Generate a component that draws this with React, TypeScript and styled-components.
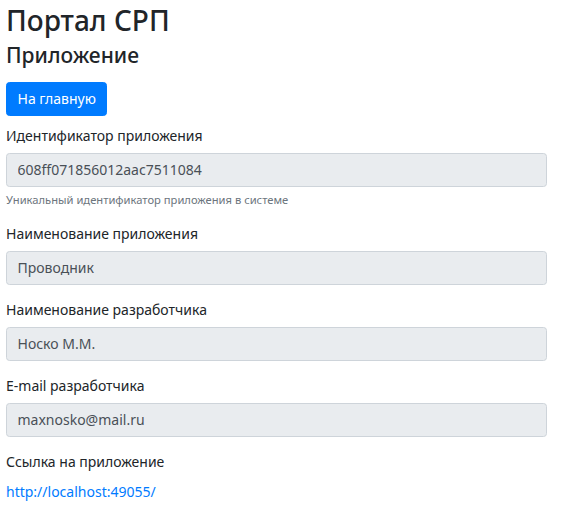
import { createGlobalStyle } from "styled-components"
import styled from "styled-components"

const GlobalStyle = createGlobalStyle`
  * { box-sizing: border-box; }
  body {
    margin: 0;
    font-family: "Noto Sans", "Open Sans", sans-serif;
    font-size: 14px;
    line-height: 1.5;
    color: #212529;
    background: #fff;
  }
`

const Page = styled.div`
  display: flex;
  flex-direction: column;
  padding: 0 16px 0 6px;
`

const Title = styled.h2`
  margin: 4px 0 5px;
  font-size: 28px;
  font-weight: 500;
  line-height: 1.2;
`

const Subtitle = styled.h4`
  margin: 0 0 14px;
  font-size: 21px;
  font-weight: 500;
  line-height: 1.2;
`

const HomeButton = styled.button`
  align-self: flex-start;
  height: 34px;
  padding: 0 10.5px;
  margin-bottom: 9px;
  border: 1px solid #007bff;
  border-radius: 3.5px;
  background: #007bff;
  color: #fff;
  font: inherit;
  cursor: pointer;
`

const FormGroup = styled.div`
  display: flex;
  flex-direction: column;
  margin-bottom: 14px;
`

const Label = styled.label`
  margin-bottom: 7px;
  line-height: 21px;
`

const ReadonlyInput = styled.input`
  width: 100%;
  height: 34px;
  padding: 0 10.5px;
  border: 1px solid #ced4da;
  border-radius: 3.5px;
  background: #e9ecef;
  color: #495057;
  font: inherit;
  outline: none;
`

const HelpText = styled.small`
  margin-top: 4px;
  font-size: 11.2px;
  line-height: 18px;
  color: #6c757d;
`

const AppLink = styled.a`
  margin-top: 2px;
  color: #007bff;
  text-decoration: none;
`

const fields = [
  {
    label: "Идентификатор приложения",
    value: "608ff071856012aac7511084",
    help: "Уникальный идентификатор приложения в системе",
  },
  { label: "Наименование приложения", value: "Проводник" },
  { label: "Наименование разработчика", value: "Носко М.М." },
  { label: "E-mail разработчика", value: "maxnosko@mail.ru" },
]

export default function App() {
  return (
    <>
      <GlobalStyle />
      <Page>
        <Title>Портал СРП</Title>
        <Subtitle>Приложение</Subtitle>
        <HomeButton type="button">На главную</HomeButton>
        {fields.map((f, i) => (
          <FormGroup key={i}>
            <Label>{f.label}</Label>
            <ReadonlyInput readOnly value={f.value} />
            {f.help ? <HelpText>{f.help}</HelpText> : null}
          </FormGroup>
        ))}
        <FormGroup>
          <Label>Ссылка на приложение</Label>
          <AppLink href="#">http://localhost:49055/</AppLink>
        </FormGroup>
      </Page>
    </>
  )
}
